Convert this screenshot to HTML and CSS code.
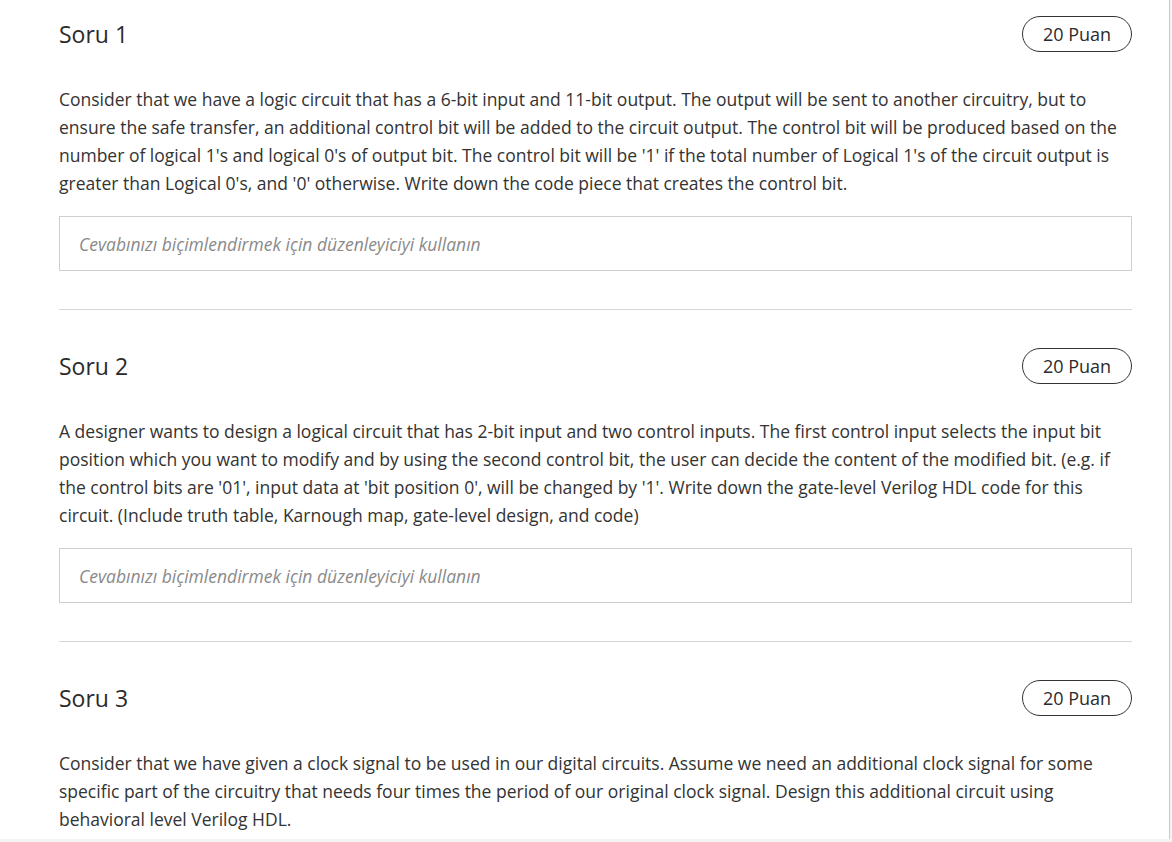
FILE: index.html
```html
<!DOCTYPE html>
<html lang="tr">
<head>
<meta charset="utf-8">
<title>Sorular</title>
<link rel="stylesheet" href="styles.css">
</head>
<body>
<div class="page">
  <section class="question">
    <div class="q-head">
      <h2 class="q-title">Soru 1</h2>
      <span class="q-points">20 Puan</span>
    </div>
    <p class="q-text">Consider that we have a logic circuit that has a 6-bit input and 11-bit output. The output will be sent to another circuitry, but to ensure the safe transfer, an additional control bit will be added to the circuit output. The control bit will be produced based on the number of logical 1's and logical 0's of output bit. The control bit will be '1' if the total number of Logical 1's of the circuit output is greater than Logical 0's, and '0' otherwise. Write down the code piece that creates the control bit.</p>
    <div class="answer">Cevabınızı biçimlendirmek için düzenleyiciyi kullanın</div>
  </section>
  <hr class="divider">
  <section class="question">
    <div class="q-head">
      <h2 class="q-title">Soru 2</h2>
      <span class="q-points">20 Puan</span>
    </div>
    <p class="q-text">A designer wants to design a logical circuit that has 2-bit input and two control inputs. The first control input selects the input bit position which you want to modify and by using the second control bit, the user can decide the content of the modified bit. (e.g. if the control bits are '01', input data at 'bit position 0', will be changed by '1'. Write down the gate-level Verilog HDL code for this circuit. (Include truth table, Karnough map, gate-level design, and code)</p>
    <div class="answer">Cevabınızı biçimlendirmek için düzenleyiciyi kullanın</div>
  </section>
  <hr class="divider">
  <section class="question">
    <div class="q-head">
      <h2 class="q-title">Soru 3</h2>
      <span class="q-points">20 Puan</span>
    </div>
    <p class="q-text">Consider that we have given a clock signal to be used in our digital circuits. Assume we need an additional clock signal for some specific part of the circuitry that needs four times the period of our original clock signal. Design this additional circuit using behavioral level Verilog HDL.</p>
  </section>
</div>
</body>
</html>
```
FILE: styles.css
```css
html, body {
  margin: 0;
  padding: 0;
}
body {
  background: #f4f4f4;
  font-family: "Open Sans", "Liberation Sans", sans-serif;
  color: #333;
}
.page {
  box-sizing: border-box;
  width: 1170px;
  height: 839px;
  overflow: hidden;
  background: #fff;
  border-right: 1px solid #c9c9c9;
  padding: 16px 37px 0 59px;
}
.question {
  display: flex;
  flex-direction: column;
}
.q-head {
  display: flex;
  align-items: center;
  justify-content: space-between;
  height: 36px;
}
.q-title {
  margin: 0;
  font-size: 23px;
  font-weight: 400;
  color: #2b2b2b;
  line-height: 30px;
}
.q-points {
  box-sizing: border-box;
  height: 36px;
  width: 110px;
  display: inline-flex;
  align-items: center;
  justify-content: center;
  border: 1px solid #333;
  border-radius: 18px;
  font-size: 18px;
  color: #2b2b2b;
}
.q-text {
  margin: 33px 0 0;
  font-size: 17.5px;
  line-height: 28px;
  color: #333;
}
.answer {
  box-sizing: border-box;
  margin-top: 19px;
  height: 55px;
  border: 1px solid #cfcfcf;
  display: flex;
  align-items: center;
  padding-left: 19px;
  font-size: 17.5px;
  font-style: italic;
  color: #8a8a8a;
}
.divider {
  margin: 38px 0 38px;
  border: 0;
  border-top: 1px solid #d6d6d6;
  height: 0;
}
```
